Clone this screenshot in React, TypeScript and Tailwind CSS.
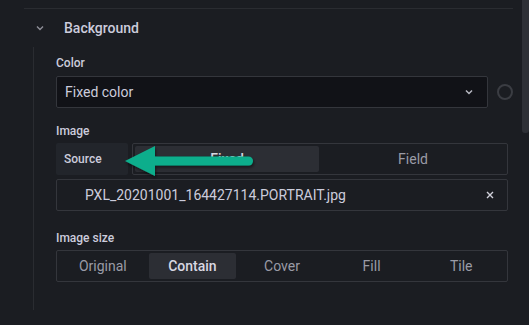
import React from "react";

const Label = ({ children }: { children: React.ReactNode }) => (
  <div className="h-[16px] text-[12px] leading-[16px] font-medium text-[#ccccdc]">{children}</div>
);

const sizes = ["Original", "Contain", "Cover", "Fill", "Tile"];

export default function App() {
  return (
    <div
      className="relative w-[529px] h-[325px] overflow-hidden bg-[#1b1d22] text-[#ccccdc]"
      style={{ fontFamily: "Roboto, 'Liberation Sans', sans-serif" }}
    >
      <div className="pl-[24px] pt-[8px]">
        <div className="w-[489px] border-t border-[#2a2c31]">
          {/* section header */}
          <div className="flex items-center h-[38px]">
            <div className="w-[40px] flex justify-start pl-[11px]">
              <svg width="10" height="10" viewBox="0 0 10 10">
                <path d="M2 3.5 L5 6.5 L8 3.5" fill="none" stroke="#8e8f98" strokeWidth="1.4" />
              </svg>
            </div>
            <span className="text-[14px] font-medium text-[#ccccdc]">Background</span>
          </div>

          {/* section body */}
          <div className="ml-[9px] border-l border-[#2a2c31] pl-[22px] pt-[8px] pb-[28px]">
            <Label>Color</Label>
            <div className="mt-[5px] flex items-center gap-[9px]">
              <div className="w-[432px] h-[32px] flex items-center justify-between rounded-[2px] border border-[#34363c] bg-[#111217] pl-[8px] pr-[12px]">
                <span className="text-[14px]">Fixed color</span>
                <svg width="12" height="12" viewBox="0 0 12 12">
                  <path d="M3 4.5 L6 7.5 L9 4.5" fill="none" stroke="#b8b9c2" strokeWidth="1.5" />
                </svg>
              </div>
              <div className="w-[16px] h-[16px] rounded-full border-2 border-[#3b3d43]" />
            </div>

            <div className="mt-[15px]">
              <Label>Image</Label>
            </div>
            <div className="mt-[4px] flex gap-[4px] w-[452px]">
              <div className="w-[72px] h-[32px] flex items-center pl-[8px] rounded-[2px] bg-[#22252b] text-[12px] font-medium text-[#ccccdc]">
                Source
              </div>
              <div className="flex-1 h-[32px] flex items-center gap-[2px] p-[2px] rounded-[2px] border border-[#34363c]">
                <div className="flex-1 h-full flex items-center justify-center rounded-[2px] bg-[#2c2e34] text-[14px] font-medium text-[#d8d8e2]">
                  Fixed
                </div>
                <div className="flex-1 h-full flex items-center justify-center text-[14px] text-[#9a9ba6]">
                  Field
                </div>
              </div>
            </div>
            <div className="mt-[4px] w-[452px] h-[32px] flex items-center justify-between rounded-[2px] border border-[#34363c] pl-[28px] pr-[12px]">
              <span className="text-[14px]">PXL_20201001_164427114.PORTRAIT.jpg</span>
              <svg width="10" height="10" viewBox="0 0 10 10">
                <path d="M2 2 L8 8 M8 2 L2 8" stroke="#d0d0da" strokeWidth="1.4" />
              </svg>
            </div>

            <div className="mt-[19px]">
              <Label>Image size</Label>
            </div>
            <div className="mt-[4px] w-[452px] h-[32px] flex items-center gap-[2px] p-[2px] rounded-[2px] border border-[#34363c]">
              {sizes.map((s) => (
                <div
                  key={s}
                  className={
                    s === "Contain"
                      ? "flex-1 h-full flex items-center justify-center rounded-[2px] bg-[#2c2e34] text-[14px] font-medium text-[#d8d8e2]"
                      : "flex-1 h-full flex items-center justify-center text-[14px] text-[#9a9ba6]"
                  }
                >
                  {s}
                </div>
              ))}
            </div>
          </div>
        </div>
      </div>

      {/* scrollbar */}
      <div className="absolute right-0 top-0 w-[7px] h-[133px] rounded-b-[3px] bg-[#2e3036]" />

      {/* annotation arrow */}
      <svg className="absolute left-[118px] top-[140px]" width="145" height="42" viewBox="118 140 145 42">
        <defs>
          <filter id="sh" x="-10%" y="-20%" width="120%" height="150%">
            <feDropShadow dx="1" dy="2" stdDeviation="1.5" floodColor="#000" floodOpacity="0.5" />
          </filter>
        </defs>
        <g filter="url(#sh)" fill="#0aae8c">
          <polygon points="125,161 155,146 155,176" />
          <rect x="150" y="156.5" width="103" height="9" rx="4.5" />
        </g>
      </svg>
    </div>
  );
}
